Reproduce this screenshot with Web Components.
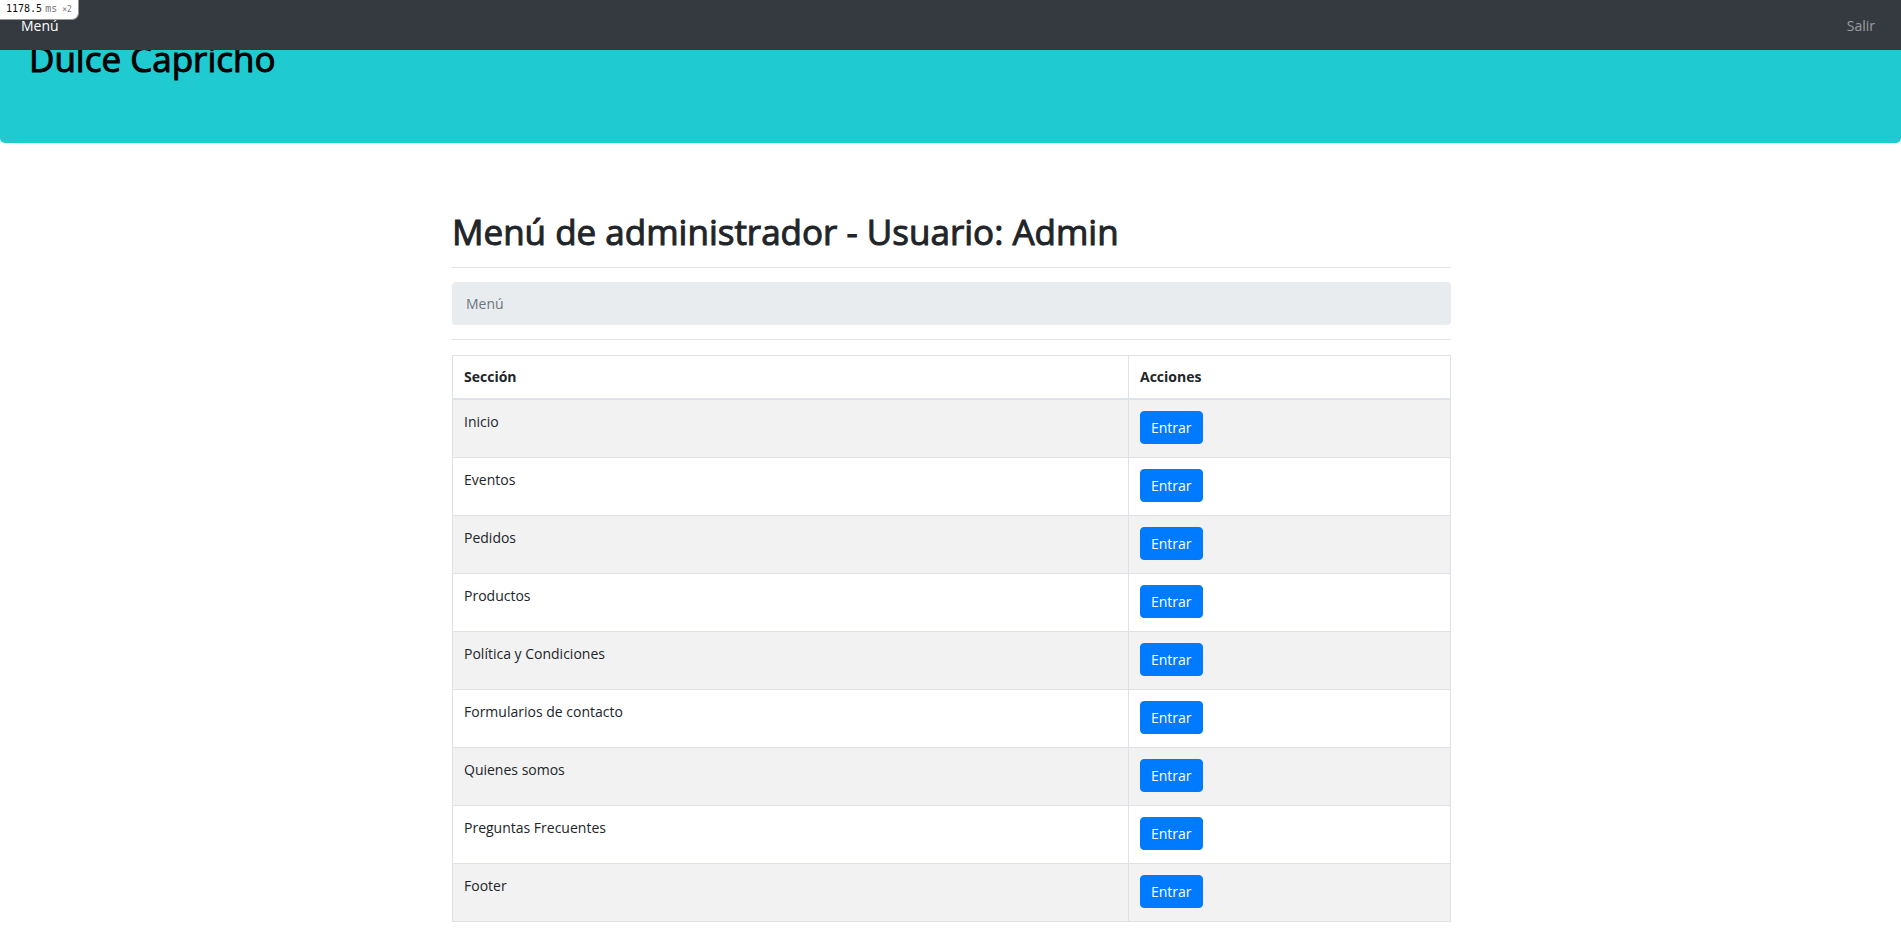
<!DOCTYPE html>
<html lang="es">
<head>
<meta charset="utf-8">
<title>Dulce Capricho - Menú de administrador</title>
<style>
  body {
    margin: 0;
    background: #fff;
    color: #212529;
    font: 14px/21px "Open Sans", "Noto Sans", sans-serif;
  }
</style>
</head>
<body>
<admin-page></admin-page>
<script>
const define = (name, html, setup) => {
  const template = document.createElement('template');
  template.innerHTML = html;
  customElements.define(name, class extends HTMLElement {
    constructor() {
      super();
      this.attachShadow({ mode: 'open' }).append(template.content.cloneNode(true));
    }
    connectedCallback() {
      if (setup && !this.ready) { this.ready = true; setup(this.shadowRoot, this); }
    }
  });
};

define('profiler-badge', `
  <style>
    :host {
      position: fixed; top: 0; left: 0; z-index: 20;
      display: flex; align-items: baseline; gap: 3px;
      box-sizing: border-box; padding: 3px 6px;
      background: #fff; border: solid #999; border-width: 0 1px 1px 0;
      border-radius: 0 0 7px 0;
      font: 10px/14px "DejaVu Sans Mono", monospace; color: #111;
    }
    :host { line-height: 12px; }
    .unit { color: #777; }
    .count { color: #777; font-size: 8px; margin-left: 2px; }
  </style>
  <span>1178.5</span><span class="unit">ms</span><span class="count">×2</span>`);

define('top-nav', `
  <style>
    :host { position: fixed; inset: 0 0 auto 0; z-index: 10; display: block; background: #343a40; }
    nav { display: flex; justify-content: space-between; align-items: center; height: 50px; padding: 0 19px 0 21px; }
  </style>
  <nav><slot></slot></nav>`);

define('nav-link', `
  <style>
    :host { display: block; }
    a { display: block; padding: 7px 0; color: rgba(255,255,255,.5); text-decoration: none; }
    :host([active]) a { color: #fff; }
    :host(:not([active])) a { padding-right: 7px; }
  </style>
  <a href="#"><slot></slot></a>`);

define('site-banner', `
  <style>
    :host { display: block; background: #1fcad0; border-radius: 5px; padding: 35px 29px 61px; color: #000; }
    h1 { margin: 0; font-size: 35px; line-height: 47px; font-weight: 500; -webkit-text-stroke: 1px currentColor; }
  </style>
  <h1><slot></slot></h1>`);

define('page-heading', `
  <style>
    :host { display: block; padding-bottom: 14px; border-bottom: 1px solid #e1e3e5; }
    h1 { margin: 0; font-size: 35px; line-height: 42px; font-weight: 500; -webkit-text-stroke: 1px currentColor; }
  </style>
  <h1><slot></slot></h1>`);

define('bread-crumb', `
  <style>
    :host { display: block; padding: 14px 0; border-bottom: 1px solid #e1e3e5; }
    ol { margin: 0; padding: 11px 14px; list-style: none; background: #e9ecef; border-radius: 4px; color: #6c757d; }
  </style>
  <nav aria-label="Ruta"><ol><li><slot></slot></li></ol></nav>`);

define('action-button', `
  <style>
    :host { display: inline-block; vertical-align: top; }
    button {
      display: block; height: 33px; padding: 0 10px; border: 1px solid #007bff; border-radius: 4px;
      background: #007bff; color: #fff; font: inherit; line-height: 21px; cursor: pointer;
    }
  </style>
  <button type="button"><slot></slot></button>`);

define('section-table', `
  <style>
    :host { display: block; padding-top: 15px; }
    table { width: 100%; border-collapse: collapse; table-layout: fixed; }
    th, td { border: 1px solid #dee2e6; padding: 11px; text-align: left; vertical-align: top; }
    th { border-bottom-width: 2px; font-weight: 700; line-height: 20px; }
    th:last-child { width: 322px; box-sizing: border-box; }
    td { height: 35px; }
    tbody tr:nth-child(odd) { background: #f2f2f2; }
  </style>
  <table>
    <thead><tr><th scope="col">Sección</th><th scope="col">Acciones</th></tr></thead>
    <tbody></tbody>
  </table>`, (root, host) => {
  const body = root.querySelector('tbody');
  for (const name of host.getAttribute('sections').split('|')) {
    const row = body.insertRow();
    row.insertCell().textContent = name;
    const button = document.createElement('action-button');
    button.textContent = 'Entrar';
    row.insertCell().append(button);
  }
});

define('admin-page', `
  <style>
    :host { display: block; }
    main { box-sizing: border-box; max-width: 1027px; margin: 0 auto; padding: 68px 13px 15px 15px; }
  </style>
  <profiler-badge></profiler-badge>
  <top-nav><nav-link active>Menú</nav-link><nav-link>Salir</nav-link></top-nav>
  <site-banner>Dulce Capricho</site-banner>
  <main>
    <page-heading>Menú de administrador - Usuario: Admin</page-heading>
    <bread-crumb>Menú</bread-crumb>
    <section-table sections="Inicio|Eventos|Pedidos|Productos|Política y Condiciones|Formularios de contacto|Quienes somos|Preguntas Frecuentes|Footer"></section-table>
  </main>`);
</script>
</body>
</html>
